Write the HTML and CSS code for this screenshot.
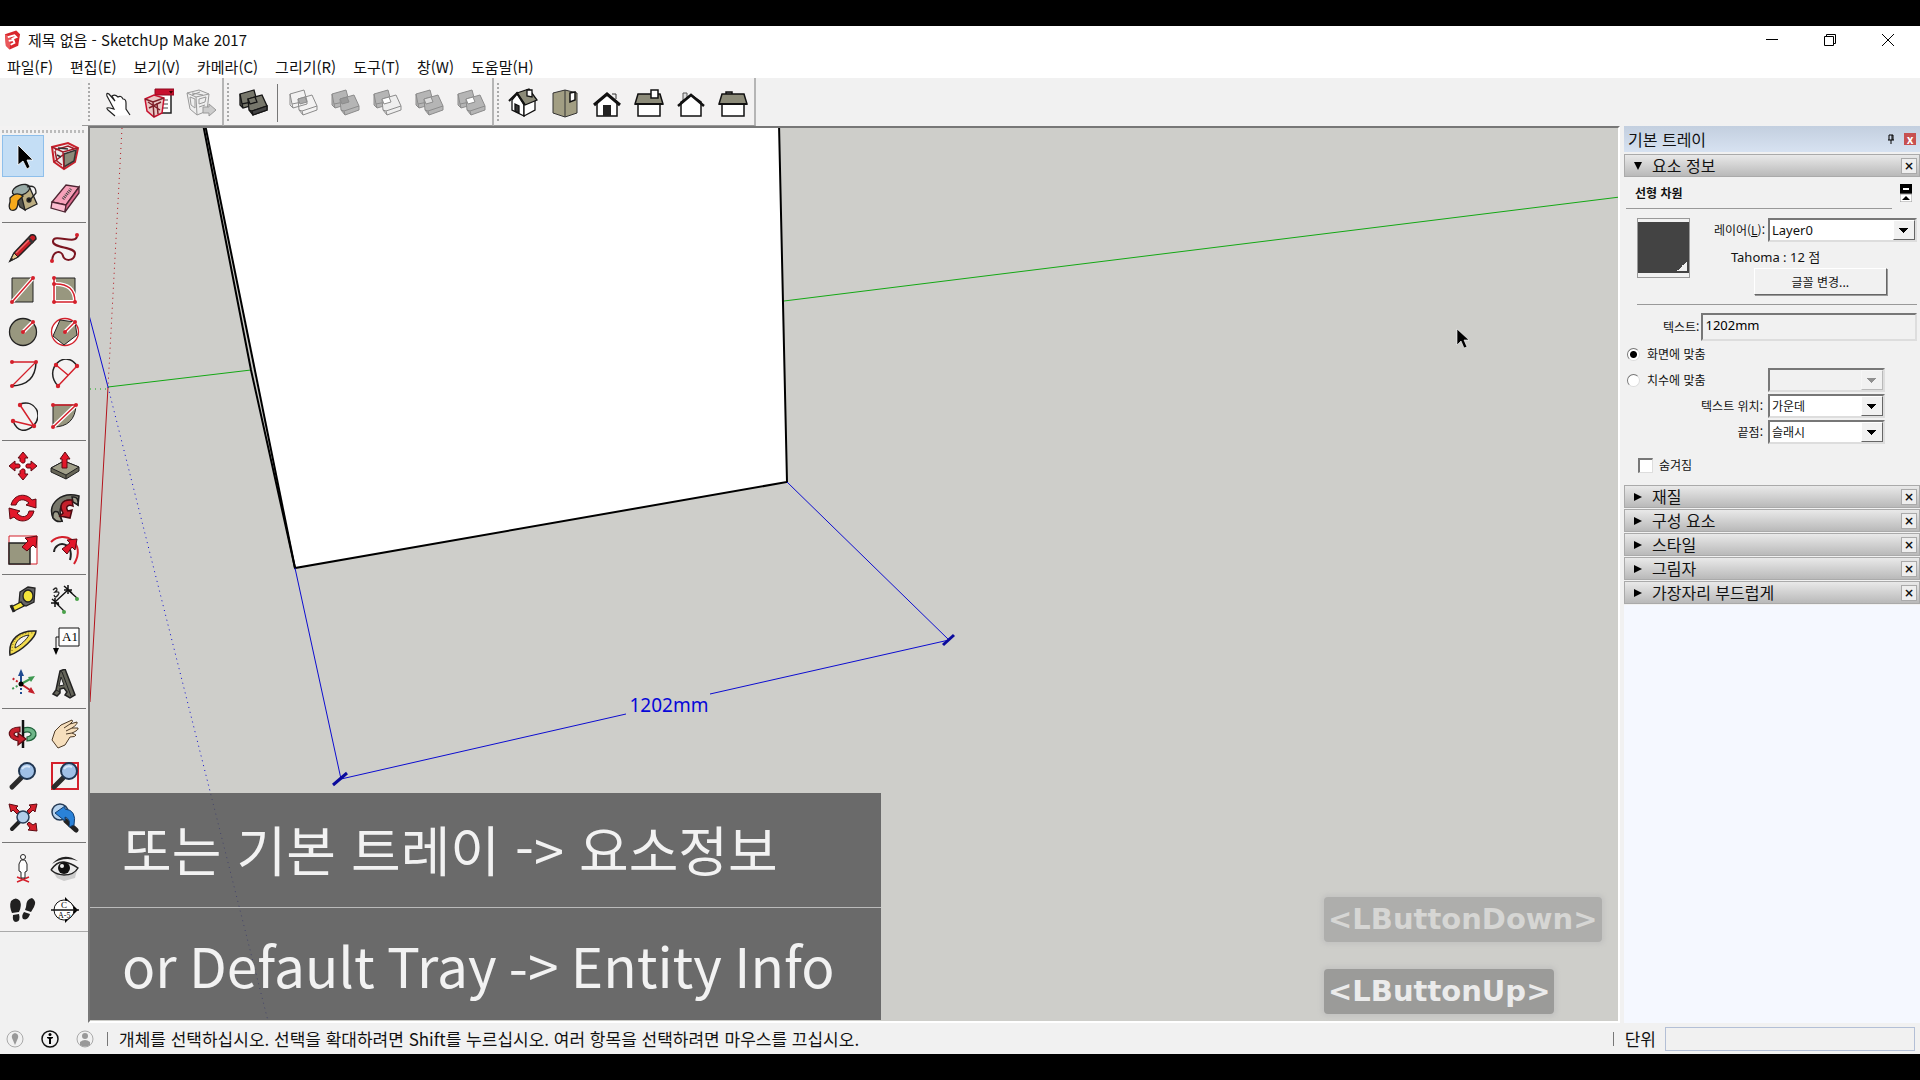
FILE: index.html
```html
<!DOCTYPE html>
<html lang="ko">
<head>
  <meta charset="UTF-8" />
  <meta name="viewport" content="width=device-width, initial-scale=1.0"/>
  <title>제목 없음 - SketchUp Make 2017</title>
  <link rel="stylesheet" href="styles.css">
</head>
<body>
  <!-- shared shapes -->
  <svg class="defs" width="0" height="0" aria-hidden="true">
    <defs>
      <g id="backBox">
        <path d="M2 6 16 2 19 13 19 16 5 20 2 17Z"/>
        <path d="M2 6 4 16 19 13M4 16 5 20" fill="none"/>
      </g>
      <g id="frontBox">
        <path d="M10 11 24 7 29 18 29 22 15 27 11 22Z"/>
        <path d="M11 22 14 23 29 18M14 23 15 27" fill="none"/>
      </g>
      <path id="overlap" d="M10 11 17 9 19 14 12 16Z"/>
      <g id="lens">
        <path d="M13 17 4 26" stroke="#2b2b2b" stroke-width="5" stroke-linecap="round"/>
        <circle cx="19" cy="10" r="8" fill="#9fc0e6" stroke="#1f3550" stroke-width="2"/>
        <path d="M14 8q3-4 8-2" fill="none" stroke="#d7e7f8" stroke-width="2"/>
      </g>
    </defs>
  </svg>

  <div class="window">
    <header class="titlebar">
      <svg class="logo" viewBox="0 0 18 20"><path d="M1 4 13 0 17 4 15 16 6 20 2 16Z" fill="#d9262c"/><path d="M1 4 7 7 6 20 2 16Z" fill="#e9585b"/><path d="M4 7 11 5 13 7 8 9M5 11 10 10 11 13 7 15" fill="none" stroke="#fff" stroke-width="2"/></svg>
      <h1>제목 없음 - SketchUp Make 2017</h1>
      <div class="window-buttons">
        <button aria-label="최소화"><svg viewBox="0 0 12 12"><path d="M0 5.500H12"/></svg></button>
        <button aria-label="이전 크기로"><svg viewBox="0 0 12 12"><path d="M.5 2.500H9.500V11.500H.5ZM2.500 2.500V.5H11.500V9.500H9.500"/></svg></button>
        <button aria-label="닫기"><svg viewBox="0 0 12 12"><path d="M0 0 12 12M12 0 0 12"/></svg></button>
      </div>
    </header>

    <nav class="menubar">
      <a href="#">파일(F)</a>
      <a href="#">편집(E)</a>
      <a href="#">보기(V)</a>
      <a href="#">카메라(C)</a>
      <a href="#">그리기(R)</a>
      <a href="#">도구(T)</a>
      <a href="#">창(W)</a>
      <a href="#">도움말(H)</a>
    </nav>

    <div class="toolbar">
      <div class="tool-group first">
        <button aria-label="상호 작용"><svg viewBox="0 0 30 30"><path d="M13 28 6 22Q3 19 8 20L12 21 5 8Q4 4 7 6L13 13 10 8Q13 6 16 9 19 7 21 11 24 11 24 15L24 21 28 27" fill="#fff" stroke="#222" stroke-width="1.200"/></svg></button>
        <button aria-label="구성 요소 옵션"><svg viewBox="0 0 30 30"><path d="M16 5H27V25H14" fill="#fff" stroke="#222" stroke-width="1.500"/><path d="M11 1H30V7H11Z" fill="#c8102e" stroke="#8e0b20"/><path d="M25 3h4l-2 3z" fill="#400"/><path d="M19 12H24M19 16H24M19 20H24" stroke="#444"/><path d="M1 11 10 7 20 10 18 25 10 29 3 23Z" fill="#e9c8c6" stroke="#c8102e" stroke-width="1.500"/><path d="M1 11 9 14 20 10M9 14 10 29M4 14 16 22M5 20 17 14M13 15 14 26" fill="none" stroke="#7e2029" stroke-width="1.500"/></svg></button>
        <button aria-label="구성 요소 속성"><svg viewBox="0 0 30 30" fill="#eee" stroke="#999"><path d="M1 5 13 2 23 6 21 23 11 27 4 21Z"/><path d="M1 5 10 9 23 6M10 9 11 27M4 9 9 11V20L5 17ZM13 11 20 9 19 14 13 16ZM13 19 19 17M6 5 17 7M6 7 14 4"/><path d="M17 19H23V16L30 22 23 28V25H17Z" fill="#ccc"/></svg></button>
      </div>
      <div class="tool-group">
        <button aria-label="외부 쉘"><svg viewBox="0 0 30 30" fill="#77776b" stroke="#151515" stroke-width="1.300"><use href="#backBox"/><use href="#frontBox"/><use href="#overlap"/><path d="M14 23 29 18V22L15 27Z" fill="#444"/></svg></button>
        <span class="divider"></span>
        <button aria-label="교차"><svg viewBox="0 0 30 30" fill="none" stroke="#8c8c8c"><use href="#backBox"/><use href="#frontBox"/><use href="#overlap" fill="#aaa"/></svg></button>
        <button aria-label="결합"><svg viewBox="0 0 30 30" fill="#b5b5b5" stroke="#8c8c8c"><use href="#backBox"/><use href="#frontBox"/><use href="#overlap" fill="#999"/></svg></button>
        <button aria-label="빼기"><svg viewBox="0 0 30 30" fill="#b5b5b5" stroke="#8c8c8c"><use href="#backBox"/><use href="#frontBox" fill="#eee"/><use href="#overlap" fill="#fff"/></svg></button>
        <button aria-label="자르기"><svg viewBox="0 0 30 30" fill="#b5b5b5" stroke="#8c8c8c"><use href="#backBox"/><use href="#frontBox"/><use href="#overlap" fill="#ddd"/></svg></button>
        <button aria-label="분할"><svg viewBox="0 0 30 30" fill="#b5b5b5" stroke="#8c8c8c"><use href="#backBox"/><use href="#frontBox"/><use href="#overlap" fill="#fff"/></svg></button>
      </div>
      <div class="tool-group">
        <button aria-label="등각"><svg viewBox="0 0 30 30" stroke="#111" stroke-width="1.300"><path d="M4 12 9 6 16 17V28L4 22Z" fill="#fff"/><path d="M16 16 27 11V22L16 28Z" fill="#fff"/><path d="M7 16 11 18V25L7 23Z" fill="#333"/><path d="M9 5 21 1 29 12 17 17Z" fill="#8c8b79"/><path d="M1 13 9 5 17 17" fill="none" stroke-width="2"/><path d="M19 2H24V9L19 8Z" fill="#fff"/></svg></button>
        <button aria-label="위"><svg viewBox="0 0 30 30" fill="#a29e83" stroke="#333"><path d="M3 5 15 2 27 5V25L15 29 3 25Z"/><path d="M15 2V29"/><path d="M20 5 25 4V12L20 14Z" fill="#fff" stroke="#111" stroke-width="1.500"/></svg></button>
        <button aria-label="정면"><svg viewBox="0 0 30 30"><path d="M5 14 15 7 25 14V28H5Z" fill="#fff" stroke="#111" stroke-width="1.500"/><path d="M20 6h4v5" fill="#eee" stroke="#333"/><path d="M2 17 15 6 28 17" fill="none" stroke="#111" stroke-width="3"/><path d="M11 17H19V28H11Z" fill="#222"/></svg></button>
        <button aria-label="오른쪽"><svg viewBox="0 0 30 30" stroke="#111" stroke-width="1.500"><path d="M4 15H26V28H4Z" fill="#fff"/><path d="M4 6H26L29 16H1Z" fill="#8c8b79"/><path d="M1 16H29" stroke-width="2"/><path d="M17 2H24V10H17Z" fill="#fff"/></svg></button>
        <button aria-label="뒷면"><svg viewBox="0 0 30 30"><path d="M7 12V5H11V12" fill="#ddd" stroke="#555"/><path d="M5 14 15 7 25 14V28H5Z" fill="#fff" stroke="#111" stroke-width="1.500"/><path d="M2 18 15 7 28 18" fill="none" stroke="#111" stroke-width="2.500"/></svg></button>
        <button aria-label="왼쪽"><svg viewBox="0 0 30 30" stroke="#111" stroke-width="1.500"><path d="M8 6V4H14V6" fill="#888"/><path d="M4 15H26V28H4Z" fill="#fff"/><path d="M4 6H26L29 16H1Z" fill="#8c8b79"/><path d="M1 16H29" stroke-width="2"/></svg></button>
      </div>
    </div>

    <main class="workspace">
      <aside class="palette">
        <div class="tools">
          <button class="active" aria-label="선택"><svg viewBox="0 0 30 30"><path d="M10 4V24L15 20 19 28 22 26 19 19H25Z" fill="#000" stroke="#fff" stroke-width=".8"/></svg></button>
          <button aria-label="구성 요소 만들기"><svg viewBox="0 0 30 30" stroke-width="1.500"><path d="M2 6 18 2 28 7 25 21 14 28 4 21Z" fill="#eee" stroke="#c9202b" stroke-width="2"/><path d="M14 13 26 9 24 20 14 26Z" fill="#8c8b79" stroke="#333"/><path d="M2 6 13 11 28 7M13 11 14 28M5 9 18 5 25 8M5 10 7 20 12 24M4 21 14 13" fill="none" stroke="#a21c28"/><path d="M8 7 18 8M7 14 11 16" stroke="#333"/></svg></button>
          <button aria-label="페인트통"><svg viewBox="0 0 30 30" stroke="#222" stroke-width="1.300"><path d="M5 10 21 3 29 21 17 27Z" fill="#bcae82"/><path d="M5 10 12 24 17 27 13 11Z" fill="#55554d"/><ellipse cx="13" cy="7" rx="9" ry="5" transform="rotate(-20 13 7)" fill="#98aaa6"/><path d="M19 4q9-3 9 6l-6 7" fill="none"/><path d="M2 15Q8 8 15 13L10 18Q10 29 3 27 0 25 2 19Z" fill="#f5a91b"/><circle cx="21" cy="17" r="2" fill="#111"/></svg></button>
          <button aria-label="지우개"><svg viewBox="0 0 30 30" stroke="#4d2532" stroke-width="1.300"><path d="M2 19 16 2 29 4 16 22Z" fill="#f7a1ba"/><path d="M2 19 16 22 15 29 1 25Z" fill="#fbbdd0"/><path d="M16 22 29 4V10L15 29Z" fill="#de6b8e"/><path d="M13 16 21 6" stroke="#444" stroke-width="3" stroke-dasharray="1 1"/></svg></button>
        </div>
        <div class="tools">
          <button aria-label="선"><svg viewBox="0 0 30 30"><path d="M2 28 6 20 23 2Q28 1 28 6L10 24Z" fill="#c51c24" stroke="#222" stroke-width="1.500"/><path d="M2 28 6 20 10 24Z" fill="#e8ca8e" stroke="#222"/><path d="M2 28 4 25 5 26Z" fill="#111"/><path d="M20 5 25 10" stroke="#333" stroke-width="3"/><path d="M8 20 21 7" stroke="#f06a6a" stroke-width="1.500"/></svg></button>
          <button aria-label="자유형"><svg viewBox="0 0 30 30"><path d="M2 28C3 16 12 18 13 23S24 29 25 21 2 16 3 8 28 13 27 2" fill="none" stroke="#7b1520" stroke-width="2"/><g fill="#d4202b"><circle cx="2" cy="28" r="2"/><circle cx="27" cy="2" r="2"/></g></svg></button>
          <button aria-label="사각형"><svg viewBox="0 0 30 30"><path d="M4 3H25V27H4Z" fill="#98977f" stroke="#222"/><path d="M4 27 25 3" stroke="#fff" stroke-width="4"/><path d="M4 27 25 3" stroke="#d4202b" stroke-width="1.500"/><g fill="#d4202b"><circle cx="4" cy="27" r="2"/><circle cx="25" cy="3" r="2"/></g></svg></button>
          <button aria-label="회전된 사각형"><svg viewBox="0 0 30 30"><path d="M4 3H25V27H4Z" fill="#98977f" stroke="#222"/><path d="M4 3V27H25Q25 8 4 9" fill="none" stroke="#fff" stroke-width="4"/><path d="M4 3V27H25Q25 8 4 9" fill="none" stroke="#d4202b" stroke-width="1.500"/><g fill="#d4202b"><circle cx="4" cy="3" r="2"/><circle cx="4" cy="9" r="2"/><circle cx="4" cy="27" r="2"/><circle cx="25" cy="27" r="2"/></g></svg></button>
          <button aria-label="원"><svg viewBox="0 0 30 30"><circle cx="15" cy="15" r="13.500" fill="#98977f" stroke="#222" stroke-width="1.300"/><path d="M15 15 25 5" stroke="#fff" stroke-width="4"/><path d="M15 15 25 5" stroke="#d4202b" stroke-width="1.500"/><g fill="#d4202b"><circle cx="15" cy="15" r="2"/><circle cx="25" cy="5" r="2"/></g></svg></button>
          <button aria-label="다각형"><svg viewBox="0 0 30 30"><circle cx="15" cy="15" r="13.500" fill="#fff" stroke="#d4202b" stroke-width="1.300"/><path d="M10 3 25 5 27 18 14 28 3 19Z" fill="#98977f" stroke="#222"/><path d="M15 15 25 5" stroke="#fff" stroke-width="4"/><path d="M15 15 25 5" stroke="#d4202b" stroke-width="1.500"/><g fill="#d4202b"><circle cx="15" cy="15" r="2"/><circle cx="25" cy="5" r="2"/></g></svg></button>
          <button aria-label="호"><svg viewBox="0 0 30 30" fill="none"><path d="M28 4Q27 26 4 27" stroke="#222" stroke-width="1.500"/><path d="M4 3H28L4 27" stroke="#d4202b" stroke-width="1.300"/><g fill="#d4202b"><circle cx="4" cy="3" r="2"/><circle cx="28" cy="3" r="2"/><circle cx="4" cy="27" r="2"/></g></svg></button>
          <button aria-label="2점 호"><svg viewBox="0 0 30 30" fill="none"><path d="M8 27C-8 10 16-11 27 7" stroke="#222" stroke-width="1.500"/><path d="M8 27 27 7M6 6 18 16" stroke="#d4202b" stroke-width="1.500"/><g fill="#d4202b"><circle cx="8" cy="27" r="2.200"/><circle cx="27" cy="7" r="2.200"/><circle cx="6" cy="6" r="2.200"/></g></svg></button>
          <button aria-label="3점 호"><svg viewBox="0 0 30 30" fill="none"><path d="M12 3C28-2 35 15 26 24S9 30 5 20" stroke="#222" stroke-width="1.500"/><path d="M12 4 26 25 5 20" stroke="#d4202b" stroke-width="1.500"/><g fill="#d4202b"><circle cx="12" cy="4" r="2.200"/><circle cx="26" cy="25" r="2.200"/><circle cx="5" cy="20" r="2.200"/></g></svg></button>
          <button aria-label="원형"><svg viewBox="0 0 30 30"><path d="M3 4H26Q25 26 3 26Z" fill="#98977f" stroke="#222"/><path d="M3 26 26 4" stroke="#fff" stroke-width="4"/><path d="M3 4H26L3 26" fill="none" stroke="#d4202b" stroke-width="1.500"/><g fill="#d4202b"><circle cx="3" cy="4" r="2"/><circle cx="26" cy="4" r="2"/><circle cx="3" cy="26" r="2"/></g></svg></button>
        </div>
        <div class="tools">
          <button aria-label="이동"><svg viewBox="0 0 30 30"><path d="M15 1 20 7H17V12L12 12V7H10ZM15 29 20 23H17V18H12V23H10ZM1 15 7 10V13H12V17H7V20ZM29 15 23 10V13H18V17H23V20Z" fill="#e3172a" stroke="#5d0a12"/><path d="M11 11 19 19M19 11 11 19" stroke="#fff" stroke-width="2"/></svg></button>
          <button aria-label="밀기/끌기"><svg viewBox="0 0 30 30"><path d="M1 17 14 10 29 16V20L16 28 1 21Z" fill="#666556" stroke="#222"/><path d="M1 17 14 10 29 16 16 24Z" fill="#a09f89" stroke="#222"/><path d="M16 24V28" stroke="#222"/><path d="M15 1 20 8H17V17H12V8H10Z" fill="#e3172a" stroke="#5d0a12"/></svg></button>
          <button aria-label="회전"><svg viewBox="0 0 30 30" fill="#e3172a" stroke="#5d0a12"><path d="M3 12C6 0 19 0 24 7L28 6 28 15 18 12 21 10C16 5 10 6 8 12Z"/><path d="M26 18C23 30 11 30 6 24L2 26 1 15 12 18 9 20C14 26 20 24 21 18Z"/></svg></button>
          <button aria-label="따라가기"><svg viewBox="0 0 30 30" stroke="#1f1f1f" stroke-width="1.500"><path d="M3 25C-3 10 12-2 29 3L28 12 23 8C13 5 7 14 12 28Z" fill="#77776b"/><path d="M3 25Q2 17 8 19L12 28Q7 30 3 25M22 4Q29 3 28 12L23 9Z" fill="#9f9e8c"/><path d="M22 7C11 6 9 13 13 20L10 23 20 25 22 17 18 18C15 14 18 11 23 13Z" fill="#c4202b" stroke="#4d0a10"/></svg></button>
          <button aria-label="배율"><svg viewBox="0 0 30 30"><path d="M1 1H29V29H1Z" fill="#fff" stroke="#d4202b"/><path d="M1 8H22V29H1Z" fill="#98977f" stroke="#222" stroke-width="1.500"/><path d="M14 12 20 6 17 3 29 1 28 13 25 10 19 16Z" fill="#e3172a" stroke="#5d0a12"/></svg></button>
          <button aria-label="오프셋"><svg viewBox="0 0 30 30" fill="none"><path d="M1 7C14-6 37 8 24 29" stroke="#d4202b" stroke-width="2"/><path d="M4 17C5 5 25 6 20 25" stroke="#222" stroke-width="2"/><path d="M12 14 20 8 17 5 27 4 25 15 22 12 17 19Z" fill="#e3172a" stroke="#5d0a12"/></svg></button>
        </div>
        <div class="tools">
          <button aria-label="줄자 도구"><svg viewBox="0 0 30 30" stroke="#222" stroke-width="1.300"><path d="M12 7 20 2 27 3 26 17 18 21 11 18Z" fill="#666"/><ellipse cx="20" cy="11" rx="5" ry="6" fill="#f4e53b"/><path d="M13 17 16 21 6 26 3 22Z" fill="#f4e53b"/><path d="M3 20 6 27" stroke-width="3"/></svg></button>
          <button aria-label="치수"><svg viewBox="0 0 30 30"><path d="M5 17 18 5 27 13M5 17 14 26" fill="none" stroke="#111" stroke-width="1.300"/><path d="M2 14 9 20M1 18H9M5 13V22M14 1 22 8M14 5H22M18 0V9" stroke="#111" stroke-width="1.500"/><path d="M3 5Q7 1 7 5L5 7Q11 6 8 10T4 10" fill="none" stroke="#222" stroke-width="1.300"/><g fill="#4aa24a"><circle cx="27" cy="14" r="2"/><circle cx="14" cy="27" r="2"/></g></svg></button>
          <button aria-label="각도기"><svg viewBox="0 0 30 30"><path d="M2 28C0 12 12 3 28 4 28 10 14 24 2 28Z" fill="#f2dc4f" stroke="#222" stroke-width="1.500"/><path d="M7 21C7 14 13 9 21 8 19 12 13 18 7 21Z" fill="#f3f1f1" stroke="#222"/><path d="M4 24C4 12 12 5 25 6" fill="none" stroke="#77640e" stroke-dasharray="1 2"/></svg></button>
          <button aria-label="텍스트"><svg viewBox="0 0 30 30"><path d="M9 1H29V19H9Z" fill="#fff" stroke="#111"/><path d="M9 10H6V22" fill="none" stroke="#111"/><path d="M3 21H9L6 28Z"/><text class="icon-serif" x="12" y="14" font-size="13">A1</text></svg></button>
          <button aria-label="축"><svg viewBox="0 0 30 30" stroke-width="2"><path d="M13 15V5" stroke="#204b91"/><path d="M13 15 24 9" stroke="#3e9951"/><path d="M13 15 25 23" stroke="#c31f2a"/><path d="M13 15V27" stroke="#204b91" stroke-dasharray="2 2"/><path d="M13 15 4 20" stroke="#3e9951" stroke-dasharray="2 2"/><path d="M13 15 4 9" stroke="#c31f2a" stroke-dasharray="2 2"/><path d="M13 0 16 7H10Z" fill="#204b91"/><path d="M27 7 23 13 20 8Z" fill="#3e9951"/><path d="M27 25 20 23 23 18Z" fill="#c31f2a"/><circle cx="13" cy="15" r="2.500"/></svg></button>
          <button aria-label="3D 텍스트"><svg viewBox="0 0 30 30"><path d="M10 2 15 0 25 26 20 29 15 26 17 23 14 19 10 20 10 24 7 27 3 25 6 21Z" fill="#65655a" stroke="#222" stroke-width="1.500"/><path d="M11 8 14 16 9 17Z" fill="#f3f1f1" stroke="#222"/><path d="M10 2 12 3 21 27M6 21 10 23" fill="none" stroke="#222"/></svg></button>
        </div>
        <div class="tools">
          <button aria-label="궤도"><svg viewBox="0 0 30 30" stroke-width="1.200"><path d="M15 9C30 5 33 21 19 22V18C27 16 22 11 15 14Z" fill="#6fb689" stroke="#1d6039"/><path d="M15 1V29" stroke="#111" stroke-width="2.500"/><path d="M12 8C-1 8-3 19 10 22V26L18 20 10 14V18C4 16 5 13 12 13Z" fill="#c7202c" stroke="#5d0a12"/></svg></button>
          <button aria-label="이동 보기"><svg viewBox="0 0 30 30"><path d="M2 21 5 12 11 6 22 1Q24 2 20 5L27 3Q28 5 22 9L28 9Q29 11 22 14L26 16Q26 18 20 18L15 26 8 29Z" fill="#f6dfbd" stroke="#4c3a27"/><path d="M14 9 20 5M16 12 22 9M16 15 22 14" stroke="#4c3a27"/></svg></button>
          <button aria-label="확대/축소"><svg viewBox="0 0 30 30"><use href="#lens"/></svg></button>
          <button aria-label="확대/축소 창"><svg viewBox="0 0 30 30"><path d="M2 2H28V28H2Z" fill="none" stroke="#d4202b" stroke-width="2"/><use href="#lens"/></svg></button>
          <button aria-label="범위 확대"><svg viewBox="0 0 30 30"><g fill="#d4202b" stroke="#5d0a12"><path d="M1 1 10 3 8 5 12 9 9 11 5 7 3 9Z"/><path d="M29 1 27 9 25 7 21 11 19 8 23 4 21 2Z"/><path d="M29 28 20 27 22 25 19 21 21 19 25 22 28 20Z"/></g><path d="M11 19 4 26" stroke="#222" stroke-width="4" stroke-linecap="round"/><circle cx="15" cy="14" r="6" fill="#b2cdea" stroke="#263b55" stroke-width="1.500"/></svg></button>
          <button aria-label="이전"><svg viewBox="0 0 30 30"><path d="M16 18 26 27" stroke="#222" stroke-width="5" stroke-linecap="round"/><circle cx="10" cy="9" r="8" fill="#b7d3ee" stroke="#263b55" stroke-width="1.500"/><path d="M5 10 15 3V6Q27 7 24 22L19 24Q21 16 15 14V18Z" fill="#2a82d8" stroke="#123e70"/></svg></button>
        </div>
        <div class="tools">
          <button aria-label="카메라 배치"><svg viewBox="0 0 30 30"><path d="M9 24 21 29M21 24 9 29" stroke="#d4202b" stroke-width="1.500"/><path d="M13 7H17L19 11V18L17 19V25H13V19L11 18V11Z" fill="#fff" stroke="#222"/><circle cx="15" cy="4" r="2.500" fill="#fff" stroke="#222"/></svg></button>
          <button aria-label="둘러보기"><svg viewBox="0 0 30 30"><path d="M3 19Q14 28 27 17L25 25 14 28 7 25Z" fill="#ccc"/><path d="M1 17Q7 8 14 9T28 15Q24 22 14 22 7 22 1 17" fill="#e9e9e9" stroke="#222" stroke-width="1.500"/><path d="M2 11Q13-2 28 8 14 3 2 11" fill="#222"/><circle cx="14" cy="15" r="6" fill="#111"/><circle cx="12" cy="13" r="2" fill="#eee"/></svg></button>
          <button aria-label="걷기"><svg viewBox="0 0 30 30" fill="#202020"><path d="M3 6Q8 1 12 6 14 11 11 17L4 18Q1 11 3 6ZM5 20 11 19Q13 26 8 27 4 27 5 20ZM18 12Q18 4 24 3 29 6 26 12L23 17 17 15ZM16 17 22 19Q20 26 15 24 13 21 16 17Z"/></svg></button>
          <button aria-label="단면"><svg viewBox="0 0 30 30"><path d="M15 2 28 15 15 28Z"/><circle cx="14" cy="15" r="10" fill="#fff" stroke="#111"/><path d="M1 15H29" stroke="#111" stroke-width="1.500"/><text class="icon-serif" x="11" y="13" font-size="9">C</text><text class="icon-serif" x="8" y="23" font-size="8">A-5</text></svg></button>
        </div>
      </aside>

      <section class="viewport">
        <svg class="scene" viewBox="90 128 1528 893" preserveAspectRatio="xMinYMin slice">
          <path class="green" d="M108 387 251 370M784 301 1620 197"/>
          <path class="red" d="M108 387 90 702"/>
          <path class="blue" d="M89 315 108 387"/>
          <path class="red dotted" d="M122 128 108 387"/>
          <path class="blue dotted" d="M108 387 268 1021"/>
          <path class="green dotted" d="M90 389H108"/>
          <path class="face" d="M204 120 779 120 787 482 295 568Z"/>
          <path class="edge" d="M203 124 251 370 295 568 787 482 779 124"/>
          <path class="edge thin" d="M205 124 295 568"/>
          <path class="blue" d="M295 568 341 779M787 482 949 640M341 779 626 714M710 694 949 640"/>
          <path class="tick" d="M333 785 347 773M943 645 954 635"/>
          <text class="dimension" x="669" y="712" text-anchor="middle">1202mm</text>
          <path d="M1457 329V345L1461 341 1464 348 1467 347 1464 340H1469Z" stroke="#fff" stroke-width=".6"/>
        </svg>
        <div class="caption">
          <p>또는 기본 트레이 -&gt; 요소정보</p>
          <p lang="en">or Default Tray -&gt; Entity Info</p>
        </div>
        <div class="keys">
          <kbd class="fading">&lt;LButtonDown&gt;</kbd>
          <kbd>&lt;LButtonUp&gt;</kbd>
        </div>
      </section>

      <aside class="tray">
        <header class="tray-title">
          <h2>기본 트레이</h2>
          <button class="pin" aria-label="고정"><svg viewBox="0 0 8 10"><path d="M1 6H7M2 6V1H6V6M4 6V10M5 1V6" fill="none" stroke="#000"/></svg></button>
          <button class="tray-close" aria-label="닫기">x</button>
        </header>

        <div class="panel-head open"><button class="toggle">요소 정보</button><button class="panel-close" aria-label="요소 정보 닫기">×</button></div>
        <form class="entity">
          <div class="entity-name">
            <h3>선형 차원</h3>
            <button type="button" class="collapse" aria-label="세부 정보 숨기기"><svg viewBox="0 0 12 18"><path d="M0 0H12V10H0Z"/><path d="M0 10H12V18H0Z" fill="#fff" stroke="#999"/><path d="M3 5H9" stroke="#fff" stroke-width="2"/><path d="M2 16 6 12 10 16Z"/></svg></button>
          </div>
          <div class="entity-main">
            <button type="button" class="swatch" aria-label="재질"></button>
            <div class="entity-fields">
              <div class="layer-row">
                <label for="layer">레이어(<u>L</u>):</label>
                <span class="dropdown"><select id="layer"><option>Layer0</option></select></span>
              </div>
              <p>Tahoma : 12 점</p>
              <button type="button" class="font-button">글꼴 변경...</button>
            </div>
          </div>
          <div class="text-row">
            <label for="text">텍스트:</label>
            <input id="text" type="text" value="1202mm">
          </div>
          <div class="align-row">
            <input type="radio" name="align" id="screen" checked>
            <label for="screen">화면에 맞춤</label>
          </div>
          <div class="align-row">
            <input type="radio" name="align" id="dim">
            <label for="dim">치수에 맞춤</label>
            <span class="dropdown small"><select aria-label="치수에 맞춤" disabled><option></option></select></span>
          </div>
          <div class="select-row">
            <label for="position">텍스트 위치:</label>
            <span class="dropdown small"><select id="position"><option>가운데</option></select></span>
          </div>
          <div class="select-row">
            <label for="endpoint">끝점:</label>
            <span class="dropdown small"><select id="endpoint"><option>슬래시</option></select></span>
          </div>
          <div class="hidden-row">
            <input type="checkbox" id="hide">
            <label for="hide">숨겨짐</label>
          </div>
        </form>
        <div class="panel-head"><button class="toggle">재질</button><button class="panel-close" aria-label="재질 닫기">×</button></div>
        <div class="panel-head"><button class="toggle">구성 요소</button><button class="panel-close" aria-label="구성 요소 닫기">×</button></div>
        <div class="panel-head"><button class="toggle">스타일</button><button class="panel-close" aria-label="스타일 닫기">×</button></div>
        <div class="panel-head"><button class="toggle">그림자</button><button class="panel-close" aria-label="그림자 닫기">×</button></div>
        <div class="panel-head"><button class="toggle">가장자리 부드럽게</button><button class="panel-close" aria-label="가장자리 부드럽게 닫기">×</button></div>
        <div class="tray-empty"></div>
      </aside>
    </main>

    <footer class="statusbar">
      <button aria-label="지리적 위치"><svg viewBox="0 0 18 18"><circle cx="9" cy="9" r="8" fill="none" stroke="#aaa"/><path d="M9 15 6 8Q5 4 9 3 13 4 12 8Z" fill="#999"/></svg></button>
      <button aria-label="크레딧"><svg viewBox="0 0 18 18"><circle cx="9" cy="9" r="8" fill="none" stroke="#111" stroke-width="1.500"/><circle cx="9" cy="4.500" r="1.500"/><path d="M6 7H12V8L10 9V14H8V9L6 8Z"/></svg></button>
      <button aria-label="로그인"><svg viewBox="0 0 18 18"><circle cx="9" cy="9" r="8" fill="none" stroke="#aaa"/><circle cx="9" cy="6" r="3" fill="#999"/><path d="M4 15V12Q9 8 14 12V15Q9 18 4 15" fill="#999"/></svg></button>
      <p class="hint">개체를 선택하십시오. 선택을 확대하려면 Shift를 누르십시오. 여러 항목을 선택하려면 마우스를 끄십시오.</p>
      <label for="measure">단위</label>
      <input id="measure" type="text">
    </footer>
  </div>
</body>
</html>
```
FILE: styles.css
```css
* {
  box-sizing: border-box;
}

body {
  margin: 0;
  background: #000;
  color: #111;
  font-family: "Noto Sans CJK KR", "Noto Sans", sans-serif;
  font-size: 15px;
  line-height: 24px;
}

h1, h2, h3, p {
  margin: 0;
  font-size: inherit;
  font-weight: normal;
}

button {
  display: flex;
  align-items: center;
  justify-content: center;
  padding: 0;
  border: none;
  background: none;
  font: inherit;
  color: inherit;
}

.defs {
  position: absolute;
}

.window {
  display: flex;
  flex-direction: column;
  min-height: 100vh;
  border: solid #000;
  border-width: 26px 0;
  background: #f1f1f1;
}

/* title and menu */
.titlebar {
  display: flex;
  align-items: center;
  height: 28px;
  padding-left: 4px;
  gap: 7px;
  background: #fff;
}

.logo {
  width: 17px;
  height: 20px;
}

.window-buttons {
  display: flex;
  margin-left: auto;
  padding-right: 3px;
}

.window-buttons button {
  width: 58px;
  height: 28px;
}

.window-buttons svg {
  width: 12px;
  height: 12px;
  fill: none;
  stroke: #000;
}

.menubar {
  display: flex;
  gap: 17px;
  height: 24px;
  padding-left: 7px;
  background: #fff;
  line-height: 26px;
}

.menubar a {
  color: inherit;
  text-decoration: none;
}

/* top toolbar */
.toolbar {
  display: flex;
  height: 48px;
  padding-left: 82px;
}

.tool-group {
  display: flex;
  align-items: center;
  padding-top: 2px;
  border-right: 2px solid #b5b5b5;
  border-bottom: 1px solid #999;
  background: #f3f2f2;
}

.tool-group::before {
  content: "";
  width: 2px;
  height: 40px;
  margin: 0 3px;
  background: repeating-linear-gradient(#aaa 0 2px, #f3f2f2 2px 4px);
}

.tool-group.first::before {
  margin: 0 6px;
}

.tool-group button,
.tools button {
  width: 42px;
  height: 42px;
}

.tool-group svg,
.tools svg {
  width: 30px;
  height: 30px;
}

.divider {
  width: 1px;
  height: 38px;
  margin: 0 4px 0 3px;
  background: #777;
}

/* work area */
.workspace {
  display: flex;
  flex: 1;
}

.palette {
  width: 88px;
  flex: none;
  align-self: flex-start;
  padding: 0 2px;
  border-bottom: 1px solid #aaa;
  background: #f3f2f2;
}

.palette::before {
  content: "";
  display: block;
  height: 3px;
  margin: 4px 0 2px;
  background: repeating-linear-gradient(90deg, #bbb 0 2px, #f3f2f2 2px 4px);
}

.tools {
  display: grid;
  grid-template-columns: 42px 42px;
}

.tools + .tools {
  margin-top: 3px;
  padding-top: 4px;
  border-top: 1px solid #777;
}

.tools .active {
  background: #c4def5;
  border: 1px solid #8ebfeb;
}

.icon-serif {
  font-family: "Liberation Serif", serif;
}

.viewport {
  position: relative;
  flex: 1;
  min-width: 0;
  border: 2px solid;
  border-color: #777 #fff #fff #777;
  background: #cececa;
  overflow: hidden;
}

.scene {
  position: absolute;
  width: 100%;
  height: 100%;
}

.scene .green,
.scene .red,
.scene .blue {
  fill: none;
  stroke-width: 1;
}

.scene .green { stroke: #14a814; }
.scene .red { stroke: #b3141c; }
.scene .blue { stroke: #0c0cd0; }
.scene .dotted { stroke-dasharray: 1 4; }
.scene .face { fill: #fff; }

.scene .edge {
  fill: none;
  stroke: #000;
  stroke-width: 2;
}

.tick {
  stroke: #0a0a9c;
  stroke-width: 3;
}

.dimension {
  font-family: "Noto Sans", sans-serif;
  font-size: 19px;
  fill: #0707d8;
}

.caption {
  position: absolute;
  left: -2px;
  bottom: 1px;
  width: 793px;
  color: #f2f2f2;
  background: rgba(81, 81, 81, 0.8);
  font-weight: 300;
  line-height: 112px;
}

.caption p {
  height: 114px;
  padding-left: 34px;
  font-size: 54px;
  white-space: nowrap;
}

.caption p + p {
  height: 113px;
  border-top: 1px solid #bbb;
  font-size: 55px;
}

.keys {
  position: absolute;
  left: 1234px;
  bottom: 7px;
  display: flex;
  flex-direction: column;
  align-items: flex-start;
  gap: 27px;
}

kbd {
  padding: 0 4px;
  border-radius: 4px;
  background: #9b9b99;
  box-shadow: 0 0 4px 3px #c4c4c2;
  color: #ebebeb;
  font-family: "DejaVu Sans", sans-serif;
  font-size: 29px;
  font-weight: bold;
  line-height: 45px;
}

kbd.fading {
  background: #aeaeac;
  color: #d6d6d4;
}

/* tray */
.tray {
  display: flex;
  flex-direction: column;
  width: 300px;
  flex: none;
  padding-left: 4px;
  font-size: 16px;
}

.tray-title {
  display: flex;
  align-items: center;
  height: 26px;
  margin-bottom: 2px;
  padding: 0 4px 0 4px;
  background: linear-gradient(#c3cfdf, #d7e2f1);
}

.tray-title h2 {
  margin-right: auto;
}

.pin svg {
  width: 8px;
  height: 10px;
}

.tray-close {
  width: 12px;
  height: 12px;
  margin-left: 9px;
  background: #c75050;
  color: #fff;
  font-size: 12px;
  font-weight: bold;
  line-height: 12px;
}

.panel-head {
  display: flex;
  align-items: center;
  justify-content: space-between;
  height: 23px;
  margin-bottom: 1px;
  padding-right: 2px;
  border: 1px solid #aaa;
  background: linear-gradient(#e9e9e9, #b9b9b9);
}

.toggle {
  flex: 1;
  justify-content: flex-start;
  padding-left: 9px;
  gap: 10px;
  line-height: 21px;
}

.toggle::before {
  content: "";
  border: solid transparent;
  border-width: 4px 0 4px 8px;
  border-left-color: #000;
}

.open .toggle::before {
  border-color: #000 transparent;
  border-width: 8px 4px 0;
}

.panel-close {
  width: 16px;
  height: 16px;
  border: 1px solid #aaa;
  background: #eee;
  font-family: "DejaVu Sans", sans-serif;
  font-size: 12px;
  font-weight: bold;
  line-height: 14px;
}

.entity {
  height: 307px;
  font-size: 12px;
  line-height: 18px;
}

.entity-name {
  display: flex;
  align-items: center;
  justify-content: space-between;
  height: 31px;
  margin: 0 28px 0 2px;
  padding-left: 9px;
  border-bottom: 1px solid #999;
}

.entity-name h3 {
  font-weight: bold;
}

.collapse {
  margin-right: -20px;
}

.collapse svg {
  width: 12px;
  height: 18px;
}

.entity-main {
  display: flex;
  justify-content: space-between;
  align-items: flex-start;
  height: 96px;
  margin: 0 3px 0 13px;
  padding-top: 9px;
  border-bottom: 1px solid #999;
}

.entity-fields {
  display: flex;
  flex-direction: column;
}

.entity-fields p {
  padding: 6px 0 2px 17px;
  font-family: "Noto Sans", "Noto Sans CJK KR", sans-serif;
  font-size: 13px;
}

.swatch {
  width: 53px;
  height: 60px;
  border: 1px solid #999;
  background: linear-gradient(135deg, transparent 50%, #eee 50%) 39px 42px / 10px 10px no-repeat,
    linear-gradient(#434343, #434343) 0 3px / 100% 51px no-repeat;
}

.layer-row,
.text-row,
.align-row,
.select-row,
.hidden-row {
  display: flex;
  align-items: center;
}

.layer-row {
  justify-content: flex-end;
  gap: 3px;
}

.dropdown {
  display: grid;
  width: 149px;
  height: 24px;
  border: 2px solid;
  border-color: #777 #ddd #ddd #777;
  background: #fff;
}

.dropdown::after {
  content: "";
  grid-area: 1 / 1;
  justify-self: end;
  width: 20px;
  background: linear-gradient(#000, #000) 5px 7px / 9px 1px no-repeat,
    linear-gradient(#000, #000) 6px 8px / 7px 1px no-repeat,
    linear-gradient(#000, #000) 7px 9px / 5px 1px no-repeat,
    linear-gradient(#000, #000) 8px 10px / 3px 1px no-repeat,
    linear-gradient(#000, #000) 9px 11px / 1px 1px no-repeat,
    #f1f1f1;
  border: 1px solid;
  border-color: #fff #666 #666 #fff;
  pointer-events: none;
}

.dropdown.small {
  width: 117px;
}

.dropdown:has(:disabled) {
  background: #f1f1f1;
}

.dropdown:has(:disabled)::after {
  opacity: 0.4;
}

.dropdown select {
  grid-area: 1 / 1;
  appearance: none;
  min-width: 0;
  padding: 0 2px;
  border: none;
  background: none;
  color: #111;
  font: inherit;
}

.dropdown #layer,
#text {
  font-family: "Noto Sans", "Noto Sans CJK KR", sans-serif;
  font-size: 13px;
}

.font-button {
  width: 133px;
  height: 27px;
  margin-left: 40px;
  border: 1px solid;
  border-color: #fff #666 #666 #fff;
  box-shadow: 1px 1px 0 #999;
}

.text-row {
  gap: 2px;
  margin: 8px 3px 0 39px;
}

.text-row input {
  flex: 1;
  min-width: 0;
  height: 28px;
  padding: 0 2px 5px;
  border: 2px solid;
  border-color: #777 #ddd #ddd #777;
  background: #f1f1f1;
}

.align-row {
  height: 26px;
  padding: 0 35px 0 3px;
  gap: 7px;
}

.align-row .dropdown {
  margin-left: auto;
}

.align-row input,
.hidden-row input {
  appearance: none;
  width: 13px;
  height: 13px;
  margin: 0;
  border: 1px solid;
  border-color: #777 #ddd #ddd #777;
  border-radius: 50%;
  background: #fff;
}

.align-row input:checked {
  background: radial-gradient(#000 0 3px, #fff 4px);
}

.select-row {
  justify-content: flex-end;
  gap: 5px;
  height: 26px;
  padding-right: 35px;
}

.hidden-row {
  gap: 6px;
  padding: 11px 0 0 14px;
}

.hidden-row input {
  width: 15px;
  height: 15px;
  border-width: 2px 1px 1px 2px;
  border-radius: 0;
}

.tray-empty {
  flex: 1;
  background: #f5f8ff;
}

/* status bar */
.statusbar {
  display: flex;
  align-items: center;
  height: 31px;
  padding: 1px 5px 0 6px;
  font-size: 17px;
}

.statusbar button {
  margin-right: 17px;
}

.statusbar svg {
  width: 18px;
  height: 18px;
}

.hint,
.statusbar label {
  display: flex;
  align-items: center;
}

.hint {
  flex: 1;
  margin-left: -4px;
}

.hint::before,
.statusbar label::before {
  content: "";
  width: 1px;
  height: 14px;
  margin-right: 11px;
  background: #777;
}

.statusbar input {
  width: 250px;
  height: 24px;
  margin-left: 9px;
  border: 1px solid #b3bfd6;
  background: #f1f1f1;
}
```
